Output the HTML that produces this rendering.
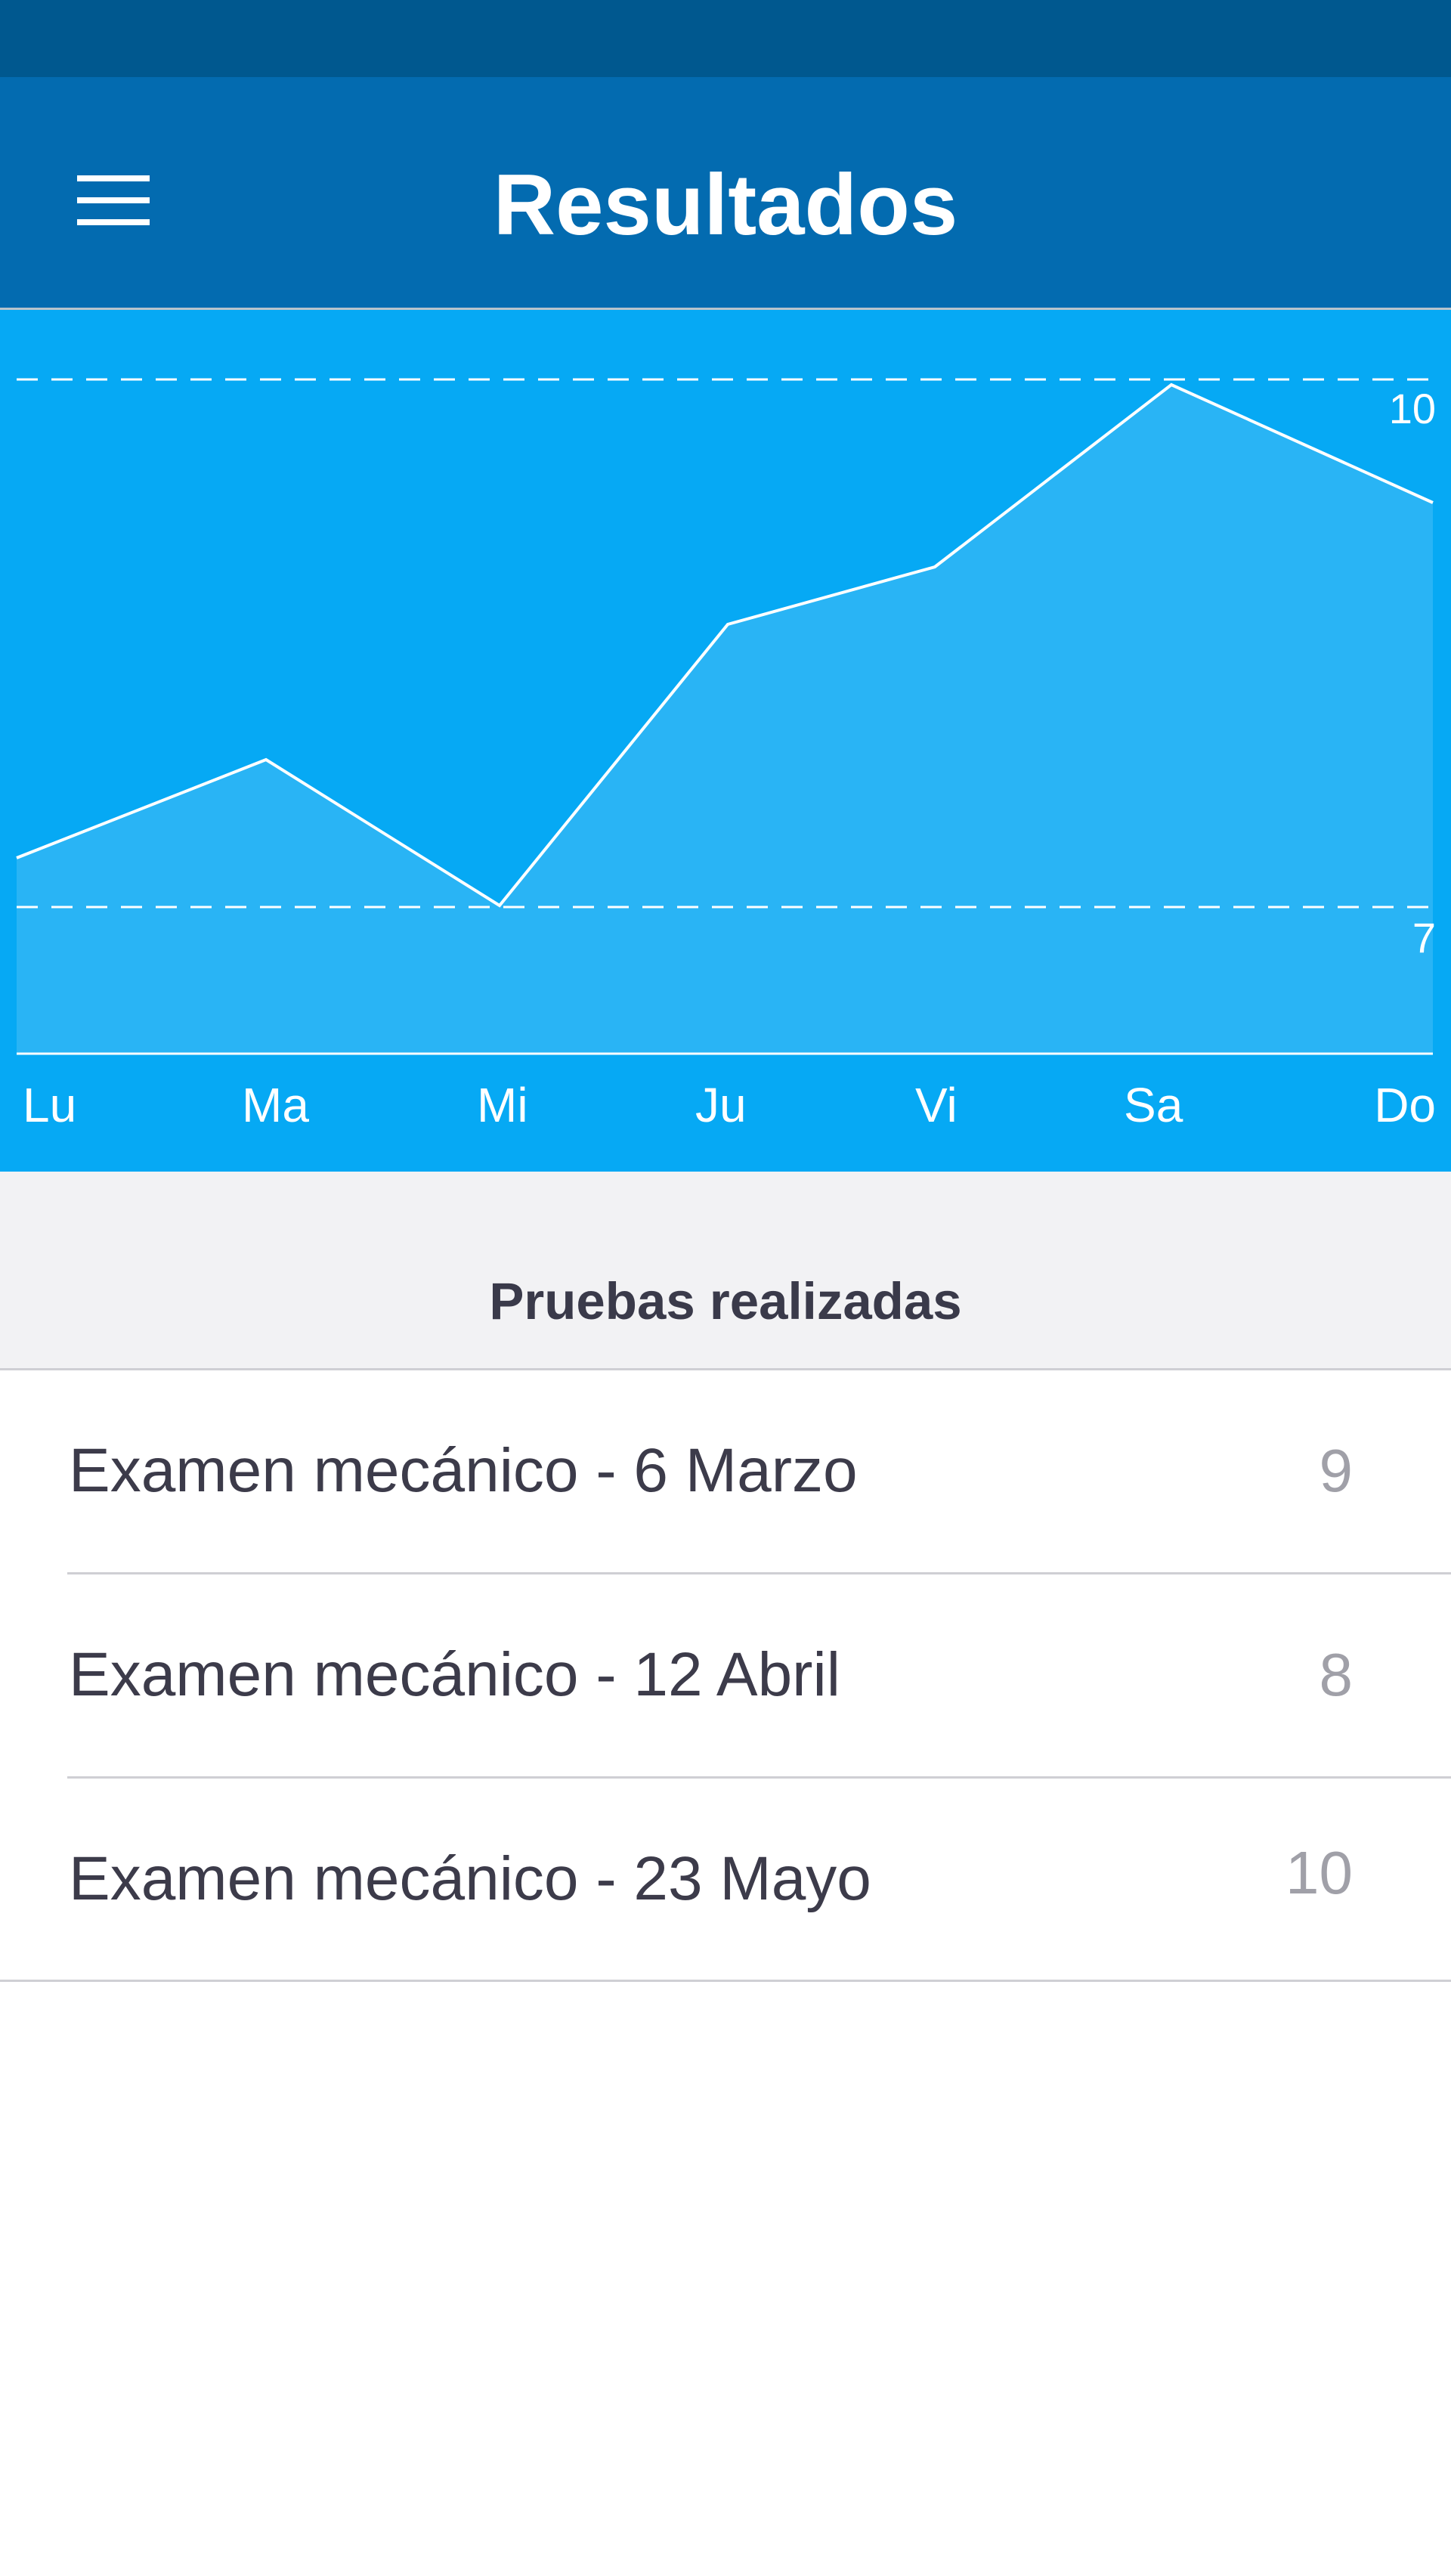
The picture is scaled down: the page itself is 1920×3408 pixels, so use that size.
<!DOCTYPE html>
<html><head><meta charset="utf-8"><style>
*{margin:0;padding:0;box-sizing:border-box}
body{width:1920px;height:3408px;background:#fff;position:relative;overflow:hidden;font-family:"Liberation Sans",sans-serif}
.a{position:absolute}
.row{position:absolute;left:91px;font-size:82px;color:#3c3b4a;line-height:1}
.val{position:absolute;right:130px;font-size:80px;color:#a0a0a8;line-height:1}
.sep{position:absolute;left:89px;right:0;height:3px;background:#cfcfd4}
</style></head><body>
<div class="a" style="left:0;top:0;width:1920px;height:102px;background:#00588f"></div>
<div class="a" style="left:0;top:102px;width:1920px;height:306px;background:#036bb0"></div>
<div class="a" style="left:0;top:407px;width:1920px;height:3px;background:#b8c4cc"></div>
<div class="a" style="left:102px;top:232px;width:96px;height:8px;background:#fff"></div>
<div class="a" style="left:102px;top:261px;width:96px;height:8px;background:#fff"></div>
<div class="a" style="left:102px;top:290px;width:96px;height:8px;background:#fff"></div>
<div class="a" style="left:0;top:205px;width:1920px;text-align:center;color:#fff;font-weight:bold;font-size:114px;line-height:134px">Resultados</div>
<svg class="a" style="left:0;top:410px" width="1920" height="1140" viewBox="0 410 1920 1140">
<rect x="0" y="410" width="1920" height="1140" fill="#06a9f4"/>
<polygon points="22,1135 352,1005 661,1198 963,826 1237,750 1550,509 1896,665 1896,1394 22,1394" fill="#29b4f5"/>
<line x1="22" y1="502" x2="1896" y2="502" stroke="#fff" stroke-width="3" stroke-dasharray="28,18"/>
<line x1="22" y1="1200" x2="1896" y2="1200" stroke="#fff" stroke-width="3" stroke-dasharray="28,18"/>
<line x1="22" y1="1394" x2="1896" y2="1394" stroke="#fff" stroke-width="3"/>
<polyline points="22,1135 352,1005 661,1198 963,826 1237,750 1550,509 1896,665" fill="none" stroke="#fff" stroke-width="4"/>
<g fill="#fff" font-family="Liberation Sans" font-size="56">
<text x="1900" y="560" text-anchor="end">10</text>
<text x="1900" y="1260" text-anchor="end">7</text>
</g>
<g fill="#fff" font-family="Liberation Sans" font-size="64">
<text x="30" y="1484">Lu</text>
<text x="320" y="1484">Ma</text>
<text x="631" y="1484">Mi</text>
<text x="920" y="1484">Ju</text>
<text x="1211" y="1484">Vi</text>
<text x="1487" y="1484">Sa</text>
<text x="1900" y="1484" text-anchor="end">Do</text>
</g>
</svg>
<div class="a" style="left:0;top:1550px;width:1920px;height:261px;background:#f2f2f4"></div>
<div class="a" style="left:0;top:1684px;width:1920px;text-align:center;font-weight:bold;font-size:69px;line-height:76px;color:#3a3a4a">Pruebas realizadas</div>
<div class="a" style="left:0;top:1810px;width:1920px;height:3px;background:#cfcfd4"></div>
<div class="row" style="top:1905px">Examen mecánico - 6 Marzo</div>
<div class="val" style="top:1906px">9</div>
<div class="sep" style="top:2080px"></div>
<div class="row" style="top:2175px">Examen mecánico - 12 Abril</div>
<div class="val" style="top:2176px">8</div>
<div class="sep" style="top:2350px"></div>
<div class="row" style="top:2445px">Examen mecánico - 23 Mayo</div>
<div class="val" style="top:2438px">10</div>
<div class="a" style="left:0;top:2619px;width:1920px;height:3px;background:#cfcfd4"></div>
</body></html>
